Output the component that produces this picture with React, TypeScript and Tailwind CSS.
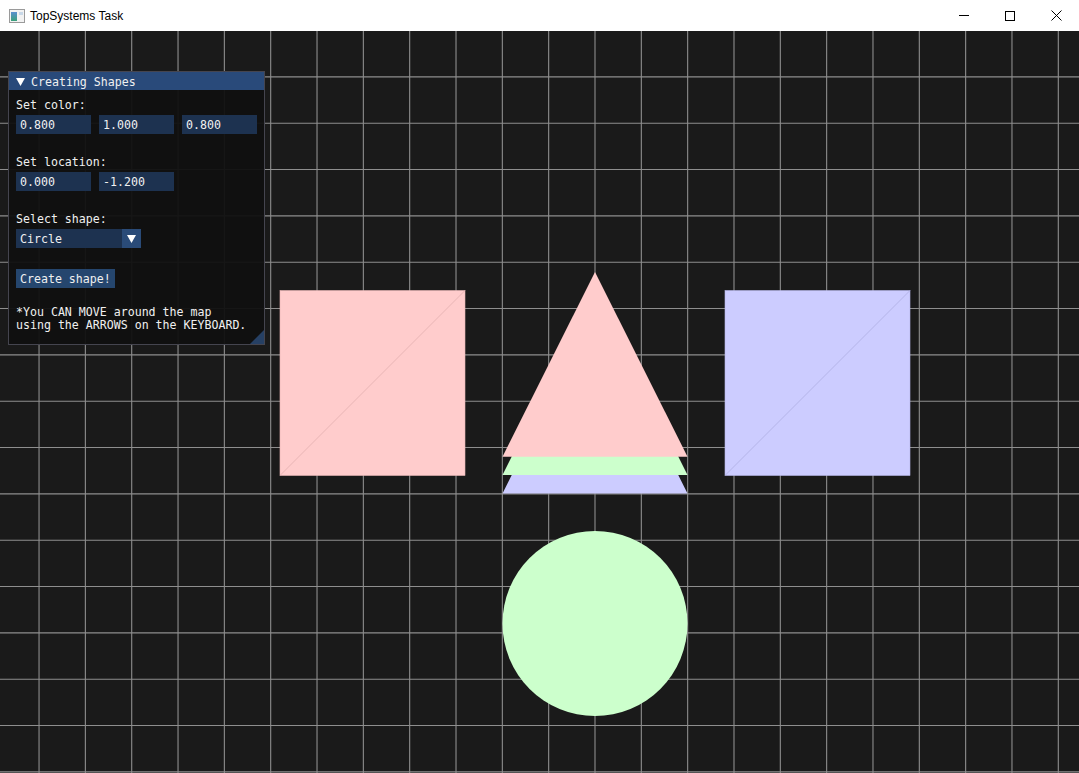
import React from 'react'

const GRID_X = Array.from({ length: 23 }, (_, i) => 595 + (i - 12) * 46.33)
const GRID_Y = Array.from({ length: 17 }, (_, i) => 540.2 + (i - 11) * 46.33)

const MONO = { fontFamily: "'DejaVu Sans Mono', 'Liberation Mono', monospace" }

function TitleBar() {
  return (
    <div className="h-[31px] bg-white flex items-center shrink-0" style={{ fontFamily: "'Liberation Sans', Arial, sans-serif" }}>
      <svg width="16" height="14" viewBox="0 0 16 14" className="ml-[9px] mr-[5px]">
        <rect x="0.5" y="0.5" width="15" height="13" fill="#f2f2f2" stroke="#9a9a9a" />
        <defs>
          <linearGradient id="ic" x1="0" y1="0" x2="0" y2="1">
            <stop offset="0" stopColor="#5a8fd0" />
            <stop offset="1" stopColor="#3aa07a" />
          </linearGradient>
        </defs>
        <rect x="2" y="3" width="6" height="9" fill="url(#ic)" />
        <rect x="10" y="3" width="4" height="3" fill="#c8d8e8" />
      </svg>
      <span className="text-[12px] text-black">TopSystems Task</span>
      <div className="ml-auto flex h-full">
        <div className="w-[46px] flex items-center justify-center">
          <div className="w-[10px] h-px bg-black" />
        </div>
        <div className="w-[46px] flex items-center justify-center">
          <div className="w-[10px] h-[10px] border border-black" />
        </div>
        <div className="w-[46px] flex items-center justify-center">
          <svg width="11" height="11" viewBox="0 0 11 11">
            <path d="M0.5 0.5 L10.5 10.5 M10.5 0.5 L0.5 10.5" stroke="#000" strokeWidth="1" />
          </svg>
        </div>
      </div>
    </div>
  )
}

function Scene() {
  return (
    <svg className="absolute inset-0 w-full h-full" viewBox="0 31 1079 742" preserveAspectRatio="none">
      <rect x="0" y="31" width="1079" height="742" fill="#1a1a1a" />
      {GRID_X.map(x => (
        <line key={'x' + x} x1={x} y1={31} x2={x} y2={773} stroke="#8e8e8e" strokeWidth="1.1" />
      ))}
      {GRID_Y.map(y => (
        <line key={'y' + y} x1={0} y1={y} x2={1079} y2={y} stroke="#8e8e8e" strokeWidth="1.1" />
      ))}

      <rect x="280" y="290.5" width="185" height="185" fill="#ffcccc" stroke="#e8b6b6" strokeWidth="0.6" />
      <line x1="280" y1="475.5" x2="465" y2="290.5" stroke="#d8a6a6" strokeWidth="0.6" />

      <rect x="725" y="290.5" width="185" height="185" fill="#ccccff" stroke="#b6b6e8" strokeWidth="0.6" />
      <line x1="725" y1="475.5" x2="910" y2="290.5" stroke="#a6a6d8" strokeWidth="0.6" />

      <polygon points="595,309 502.5,493.5 687.5,493.5" fill="#ccccff" />
      <polygon points="595,290.5 502.5,475 687.5,475" fill="#ccffcc" />
      <polygon points="595,272 502.5,456.7 687.5,456.7" fill="#ffcccc" />

      <circle cx="595" cy="623.5" r="92.5" fill="#ccffcc" />
    </svg>
  )
}

// imgui text sits a pixel lower than DejaVu's line box
function T({ children }: { children: React.ReactNode }) {
  return <span className="relative top-[1px]">{children}</span>
}

function Field({ value }: { value: string }) {
  return (
    <div className="w-[75px] h-[19px] bg-[#1d3250] flex items-center pl-[4px]"><T>{value}</T></div>
  )
}

function Panel() {
  return (
    <div
      className="absolute left-[8px] top-[40px] w-[257px] h-[274px] bg-[#101010]/95 border border-[#45454f] text-[11.6px] leading-[13px] text-[#f0f0f0] flex flex-col"
      style={MONO}
    >
      <div className="h-[18px] bg-[#294a7a] flex items-center pl-[7px] shrink-0">
        <svg width="9" height="8" viewBox="0 0 9 8" className="mr-[6px] relative top-[1px]">
          <polygon points="0,0 9,0 4.5,8" fill="#ffffff" />
        </svg>
        <T>Creating Shapes</T>
      </div>

      <div className="flex flex-col gap-[4px] px-[7px] pt-[8px]">
        <div><T>Set color:</T></div>
        <div className="flex gap-[8px]">
          <Field value="0.800" />
          <Field value="1.000" />
          <Field value="0.800" />
        </div>
        <div className="h-[13px]" />
        <div><T>Set location:</T></div>
        <div className="flex gap-[8px]">
          <Field value="0.000" />
          <Field value="-1.200" />
        </div>
        <div className="h-[13px]" />
        <div><T>Select shape:</T></div>
        <div className="w-[125px] h-[19px] bg-[#1d3250] flex">
          <div className="flex-1 flex items-center pl-[4px]"><T>Circle</T></div>
          <div className="w-[19px] bg-[#2a4b78] flex items-center justify-center">
            <svg width="9" height="8" viewBox="0 0 9 8">
              <polygon points="0,0 9,0 4.5,8" fill="#ffffff" />
            </svg>
          </div>
        </div>
        <div className="h-[13px]" />
        <div className="w-[99px] h-[19px] bg-[#25466e] flex items-center pl-[4px]"><T>Create shape!</T></div>
        <div className="whitespace-pre relative top-[1px]">{'\n*You CAN MOVE around the map\nusing the ARROWS on the KEYBOARD.'}</div>
      </div>

      <svg width="14" height="14" viewBox="0 0 14 14" className="absolute right-0 bottom-0">
        <polygon points="14,0 14,14 0,14" fill="#264064" />
      </svg>
    </div>
  )
}

export default function App() {
  return (
    <div className="w-[1079px] h-[773px] flex flex-col overflow-hidden bg-white">
      <TitleBar />
      <div className="relative flex-1">
        <Scene />
        <Panel />
      </div>
    </div>
  )
}
